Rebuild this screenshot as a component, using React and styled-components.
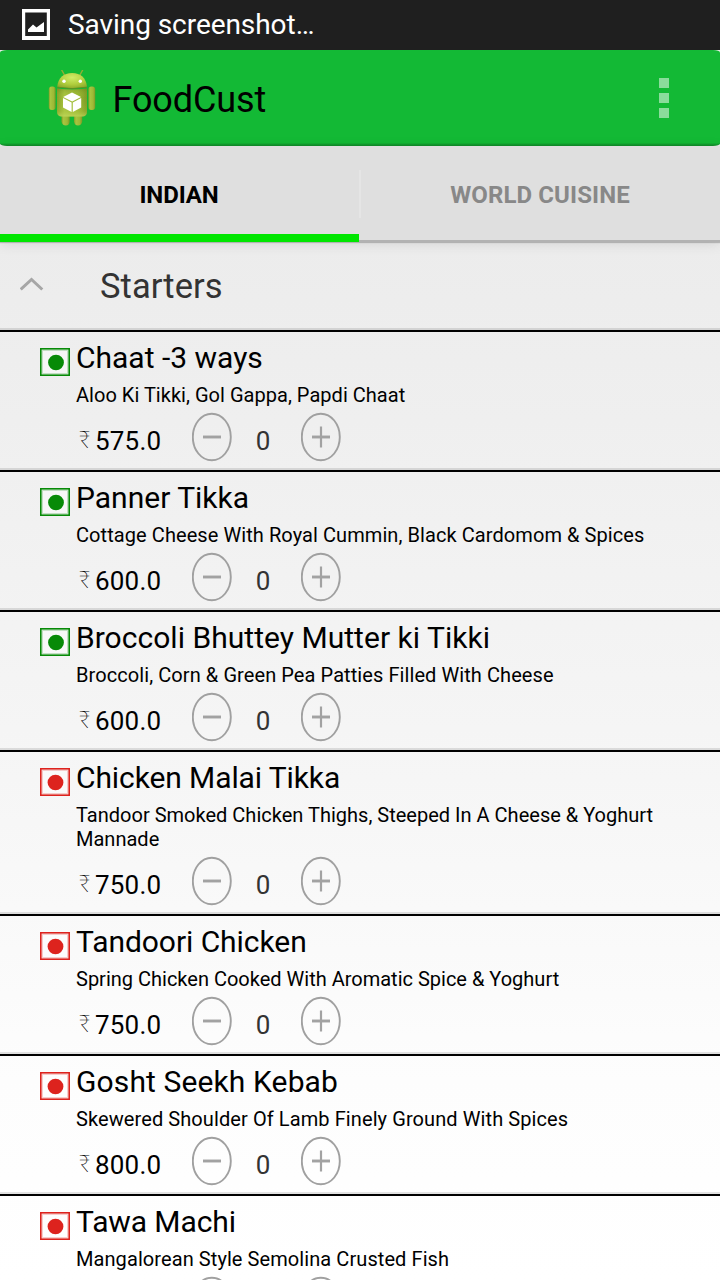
import React from "react";
import styled, { createGlobalStyle } from "styled-components";

const GlobalStyle = createGlobalStyle`
  *, *::before, *::after { box-sizing: border-box; }
  html, body { margin: 0; height: 100%; overflow: hidden; }
  body { font-family: Roboto, "Noto Sans", sans-serif; color: #000; }
`;

const Screen = styled.div`
  width: 720px;
  height: 1280px;
  overflow: hidden;
  display: flex;
  flex-direction: column;
  background: linear-gradient(#e8e8e8 0, #ececec 240px, #efefef 420px, #f6f6f6 780px, #fdfdfd 1080px, #fff 1280px);
`;

const StatusBar = styled.header`
  height: 50px;
  flex: none;
  display: flex;
  align-items: center;
  padding-left: 22px;
  gap: 18px;
  background: #1f1f1f;
  color: #fff;
`;

const StatusText = styled.span`
  font-size: 28px;
  line-height: 36px;
  letter-spacing: -0.06px;
`;

const ActionBar = styled.div`
  height: 96px;
  flex: none;
  display: flex;
  align-items: center;
  padding: 0 50px 0 48px;
  background: linear-gradient(#13b935 0, #13b935 93px, #12a22f 94px, #118928 96px);
  border-radius: 7px / 2.5px;
`;

const AppTitle = styled.h1`
  margin: 3px 0 0 16.5px;
  flex: 1;
  font-size: 36px;
  line-height: 42px;
  font-weight: 400;
  letter-spacing: -0.1px;
`;

const Overflow = styled.button`
  border: 0;
  padding: 0;
  background: none;
  display: grid;
  gap: 5px;
  margin-right: 1px;
`;

const OverflowDot = styled.i`
  width: 10px;
  height: 10px;
  background: #8adc9b;
`;

const Tabs = styled.nav`
  height: 96px;
  flex: none;
  display: flex;
  background: #dfdfdf;
  box-shadow: 0 1px 1px rgba(0, 0, 0, 0.2), 0 2px 12px rgba(0, 0, 0, 0.1);
`;

const Tab = styled.div`
  width: ${(p) => (p.$active ? 359 : 361)}px;
  display: flex;
  align-items: center;
  justify-content: center;
  padding-top: ${(p) => (p.$active ? 10 : 4)}px;
  padding-right: ${(p) => (p.$active ? 1 : 0)}px;
  padding-left: ${(p) => (p.$active ? 0 : 1)}px;
  border-bottom: ${(p) => (p.$active ? "8px solid #00e600" : "2px solid #b2b2b2")};
  color: ${(p) => (p.$active ? "#000" : "#888")};
  font-size: 24px;
  font-weight: 700;
  letter-spacing: ${(p) => p.$track || 0}px;
  background: ${(p) =>
    p.$active ? "none" : "linear-gradient(#e5e5e5, #e5e5e5) 0 24px / 2px 48px no-repeat"};
`;

const Section = styled.div`
  height: 90px;
  flex: none;
  display: flex;
  align-items: center;
  padding: 0 0 1px 20px;
  border-bottom: 2px solid #000;
  box-shadow: inset 0 -2px 0 #d3d3d3;
`;

const SectionTitle = styled.h2`
  margin: 0 0 0 56px;
  font-size: 34.5px;
  line-height: 42px;
  font-weight: 400;
  color: #333;
  letter-spacing: 0.07px;
`;

const Item = styled.article`
  flex: none;
  display: flex;
  align-items: flex-start;
  padding: 8px 40px 7px 40px;
  border-bottom: 2px solid #000;
  box-shadow: inset 0 -2px 0 rgba(0, 0, 0, 0.11);
`;

const DietMark = styled.svg`
  flex: none;
  margin: 8px 6px 0 0;
`;

const Details = styled.div`
  flex: 1;
`;

const Dish = styled.h3`
  margin: 0;
  font-size: 30px;
  line-height: 36px;
  font-weight: 400;
  white-space: nowrap;
  letter-spacing: ${(p) => p.$track || 0}px;
`;

const Blurb = styled.p`
  margin: 7px 0 4px;
  font-size: 20px;
  line-height: 24px;
  white-space: pre;
  letter-spacing: ${(p) => p.$track || 0}px;
`;

const Order = styled.div`
  height: 52px;
  display: flex;
  align-items: flex-start;
`;

const Rupee = styled.span`
  width: 19px;
  padding: 15px 0 0 3px;
  font-size: 24px;
  line-height: 28px;
  font-weight: 100;
  color: #000;
`;

const Price = styled.span`
  width: 97px;
  padding-top: 15px;
  font-size: 26px;
  line-height: 30px;
  letter-spacing: 0.2px;
`;

const Count = styled.span`
  width: 69px;
  padding: 15px 7px 0 0;
  text-align: center;
  font-size: 26px;
  line-height: 30px;
  color: #333;
`;

const StepButton = styled.button`
  border: 0;
  padding: 0;
  background: none;
  width: 40px;
  height: 50px;
  display: block;
  margin-top: 1px;
`;

const Step = ({ plus }) => (
  <StepButton>
    <svg width="40" height="50" viewBox="0 0 40 50" fill="none">
      <ellipse cx="19.8" cy="25" rx="19" ry="23.3" stroke="#a0a0a0" strokeWidth="1.9" />
      <path d="M11 25H29" stroke="#a2a2a2" strokeWidth="2.9" />
      {plus && <path d="M20 14.5V35.5" stroke="#a2a2a2" strokeWidth="2.2" />}
    </svg>
  </StepButton>
);

const Diet = ({ veg }) => {
  const c = veg ? "#078a07" : "#dd231e";
  return (
    <DietMark width="30" height="28" viewBox="0 0 30 28">
      <rect x="0.8" y="0.8" width="28.4" height="26.4" fill="#fff" fillOpacity="0.45" stroke={c} strokeWidth="1.6" />
      <rect x="2.3" y="2.3" width="25.4" height="23.4" fill="none" stroke={c} strokeOpacity="0.22" strokeWidth="1.4" />
      <ellipse cx={veg ? 16 : 15.5} cy="14.5" rx="7.9" ry="7.8" fill={c} />
    </DietMark>
  );
};

const PictureIcon = () => (
  <svg width="28" height="32" viewBox="0 0 28 32">
    <path fill="#fff" fillRule="evenodd" d="M0 0H28V31H0ZM3.2 3.6V27H24.8V3.6Z" />
    <path fill="#fff" d="M6 23V20.5L11 15.5L14.5 18.5L22 13V23Z" />
  </svg>
);

const Robot = () => (
  <svg width="48" height="56" viewBox="0 0 48 56">
    <defs>
      <linearGradient id="body" x1="0" x2="1" y1="0" y2="0">
        <stop offset="0" stopColor="#86a127" />
        <stop offset="0.25" stopColor="#a9c440" />
        <stop offset="0.7" stopColor="#9db935" />
        <stop offset="1" stopColor="#7d9824" />
      </linearGradient>
      <linearGradient id="shade" x1="0" x2="0" y1="0" y2="1">
        <stop offset="0" stopColor="#5f7a12" stopOpacity="0.35" />
        <stop offset="0.3" stopColor="#a0bb36" stopOpacity="0" />
        <stop offset="0.8" stopColor="#b9d34e" stopOpacity="0.2" />
        <stop offset="1" stopColor="#cbe067" stopOpacity="0.6" />
      </linearGradient>
      <radialGradient id="head" cx="0.5" cy="0.3" r="0.75">
        <stop offset="0" stopColor="#cfec66" />
        <stop offset="0.6" stopColor="#b0cd3d" />
        <stop offset="1" stopColor="#8ba829" />
      </radialGradient>
    </defs>
    <path d="M13.8 0.2L17 6M34.6 0.2L31.4 6" stroke="#92ad34" strokeWidth="1.4" strokeLinecap="round" />
    <g fill="url(#body)">
      <rect x="0.8" y="16.5" width="6.8" height="23.5" rx="3" />
      <rect x="40.4" y="16.5" width="6.8" height="23.5" rx="3" />
      <path d="M13.5 43H21.7V51.5Q21.5 55.5 17.8 55.5Q14.2 55.5 13.5 51.5Z" />
      <path d="M26 43H34.2V51.5Q33.5 55.5 30 55.5Q26.5 55.5 26 51.5Z" />
      <path d="M9 18.5Q24 20.5 39 18.5V41.5Q39 46.5 34 46.5H14Q9 46.5 9 41.5Z" />
    </g>
    <path d="M9 18.5Q24 20.5 39 18.5V41.5Q39 46.5 34 46.5H14Q9 46.5 9 41.5Z" fill="url(#shade)" />
    <path d="M9.2 16.8C10 8 15.5 3 24.1 3S38.2 8 39 16.8Q24 19.6 9.2 16.8Z" fill="url(#head)" />
    <path d="M9.2 17.2Q24 20 39 17.2" fill="none" stroke="#6d8620" strokeWidth="0.8" />
    <circle cx="16" cy="11.3" r="1.7" fill="#fff" />
    <circle cx="32.3" cy="11.3" r="1.7" fill="#fff" />
    <path d="M24 22.5L33 27L24.2 31.4L15.2 27Z" fill="#fff" />
    <path d="M15 28L23.6 32.4V42L15 37.5ZM33.2 28L24.8 32.4V42L33.2 37.5Z" fill="#fff" />
  </svg>
);

const ChevronIcon = styled.svg`
  margin-top: -3px;
`;

const Chevron = () => (
  <ChevronIcon width="24" height="14" viewBox="0 0 24 14" fill="none">
    <path d="M0.7 12.5L11.5 2.5L22.3 12.5" stroke="#a6a6a6" strokeWidth="3" />
  </ChevronIcon>
);

const dishes = [
  { name: "Chaat -3 ways", blurb: "Aloo Ki Tikki, Gol Gappa, Papdi Chaat", blurbTrack: 0.03, price: "575.0", veg: true },
  { name: "Panner Tikka", blurb: "Cottage Cheese With Royal Cummin, Black Cardomom & Spices", blurbTrack: 0.075, price: "600.0", veg: true },
  { name: "Broccoli Bhuttey Mutter ki Tikki", nameTrack: 0.03, blurb: "Broccoli, Corn & Green Pea Patties Filled With Cheese", blurbTrack: 0.08, price: "600.0", veg: true },
  { name: "Chicken Malai Tikka", nameTrack: -0.1, blurb: "Tandoor Smoked Chicken Thighs, Steeped In A Cheese & Yoghurt\nMannade", blurbTrack: 0.01, price: "750.0" },
  { name: "Tandoori Chicken", nameTrack: -0.06, blurb: "Spring Chicken Cooked With Aromatic Spice & Yoghurt", price: "750.0" },
  { name: "Gosht Seekh Kebab", nameTrack: 0.12, blurb: "Skewered Shoulder Of Lamb Finely Ground With Spices", blurbTrack: 0.09, price: "800.0" },
  { name: "Tawa Machi", nameTrack: -0.1, blurb: "Mangalorean Style Semolina Crusted Fish", blurbTrack: 0.08 },
];

export default function App() {
  return (
    <Screen>
      <GlobalStyle />
      <StatusBar>
        <PictureIcon />
        <StatusText>Saving screenshot…</StatusText>
      </StatusBar>
      <ActionBar>
        <Robot />
        <AppTitle>FoodCust</AppTitle>
        <Overflow>
          <OverflowDot />
          <OverflowDot />
          <OverflowDot />
        </Overflow>
      </ActionBar>
      <Tabs>
        <Tab $active $track={-0.1}>INDIAN</Tab>
        <Tab $track={0.1}>WORLD CUISINE</Tab>
      </Tabs>
      <Section>
        <Chevron />
        <SectionTitle>Starters</SectionTitle>
      </Section>
      {dishes.map((d) => (
        <Item key={d.name}>
          <Diet veg={d.veg} />
          <Details>
            <Dish $track={d.nameTrack}>{d.name}</Dish>
            <Blurb $track={d.blurbTrack}>{d.blurb}</Blurb>
            <Order>
              <Rupee>{d.price && "₹"}</Rupee>
              <Price>{d.price}</Price>
              <Step />
              <Count>{d.price && "0"}</Count>
              <Step plus />
            </Order>
          </Details>
        </Item>
      ))}
    </Screen>
  );
}
